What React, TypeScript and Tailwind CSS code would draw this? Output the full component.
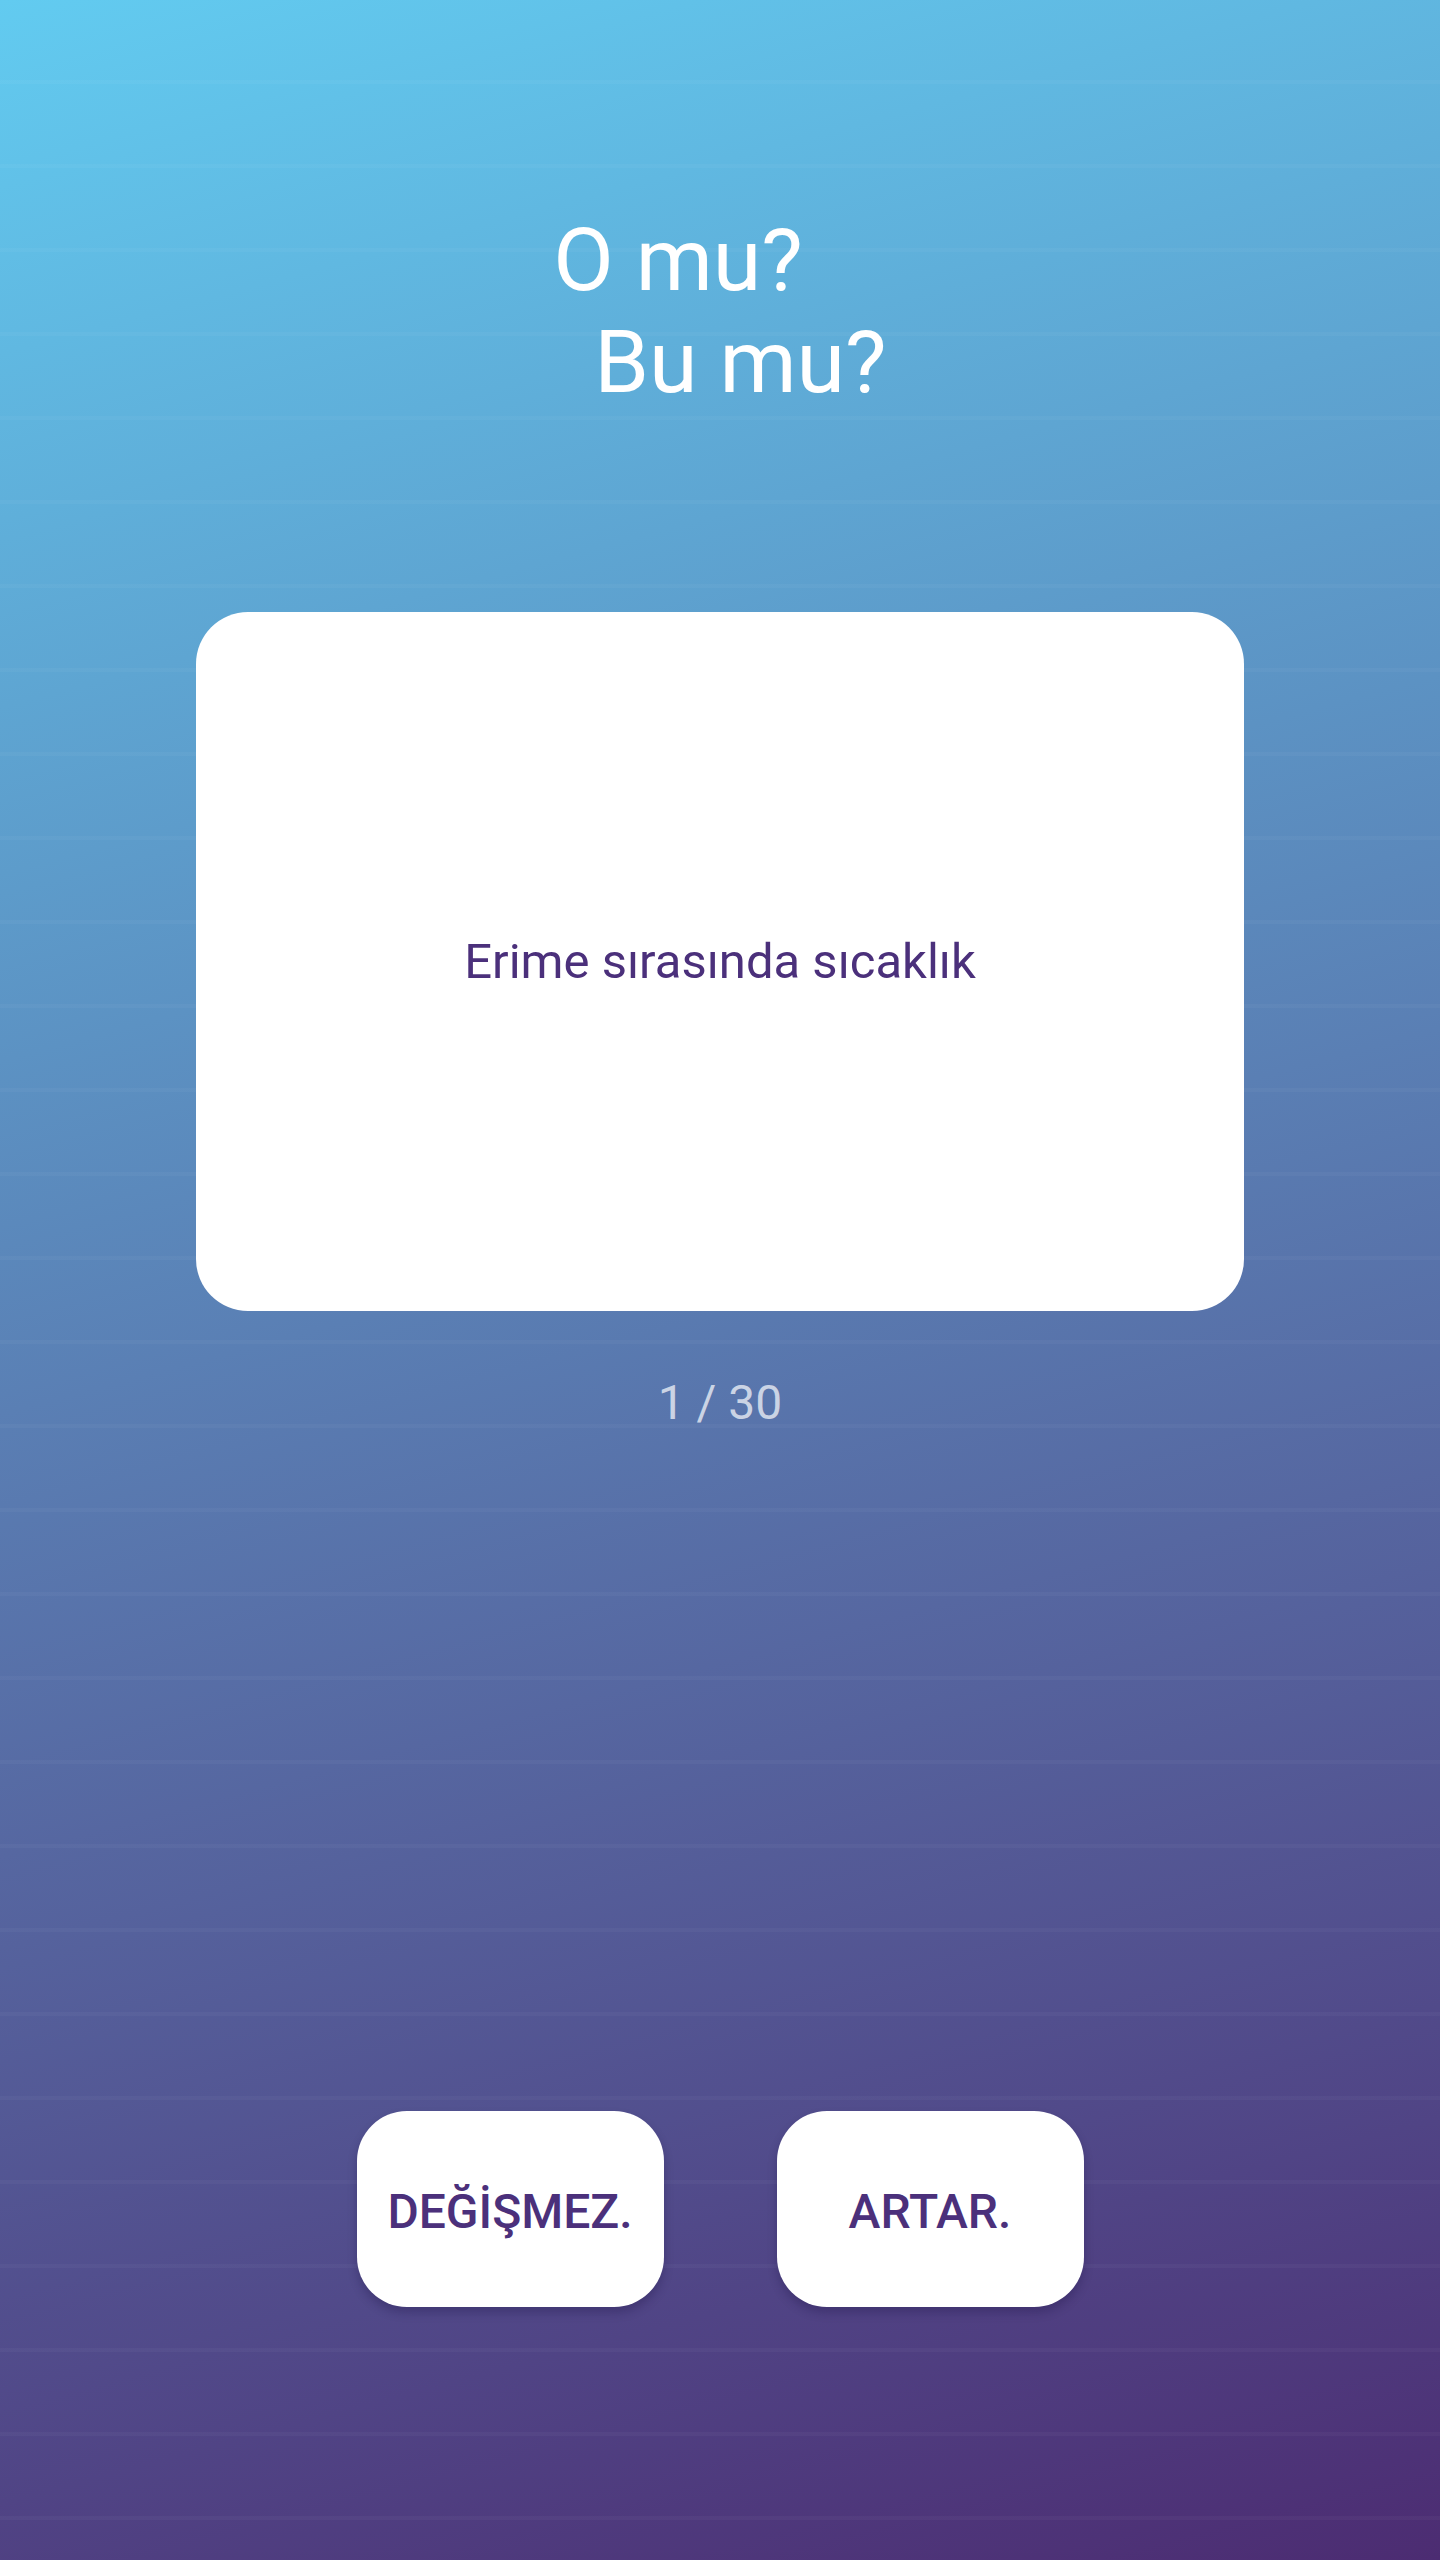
export default function App() {
    return (
        <div
            className="min-h-screen w-full flex flex-col items-center bg-[repeating-linear-gradient(180deg,transparent_0px,transparent_80px,rgba(255,255,255,0.03)_80px,rgba(255,255,255,0.03)_84px),linear-gradient(165deg,#62cbf0_0%,#5a7fb4_48%,#4c2c72_100%)]"
            style={{ fontFamily: 'Roboto, "Noto Sans", sans-serif' }}
        >
            {/* Title */}
            <div className="mt-[209px] flex flex-col items-start text-white text-[88px] leading-[102px]">
                <span>O mu?</span>
                <span className="ml-[41px]">Bu mu?</span>
            </div>

            {/* Question card */}
            <div className="mt-[199px] w-[1048px] h-[699px] rounded-[52px] bg-white flex items-center justify-center">
                <p className="text-[49px] text-[#4b307b]">Erime sırasında sıcaklık</p>
            </div>

            {/* Counter */}
            <div className="mt-[64px] text-[48px] leading-[56px] text-white/70">1 / 30</div>

            {/* Answers */}
            <div className="mt-[680px] flex gap-[113px]">
                <button className="w-[307px] h-[196px] pt-[6px] rounded-[50px] bg-white shadow-[0_6px_10px_rgba(30,20,70,0.3)] flex items-center justify-center text-[48px] font-medium text-[#4b307b]">
                    DEĞİŞMEZ.
                </button>
                <button className="w-[307px] h-[196px] pt-[6px] rounded-[50px] bg-white shadow-[0_6px_10px_rgba(30,20,70,0.3)] flex items-center justify-center text-[48px] font-medium text-[#4b307b]">
                    ARTAR.
                </button>
            </div>
        </div>
    );
}
